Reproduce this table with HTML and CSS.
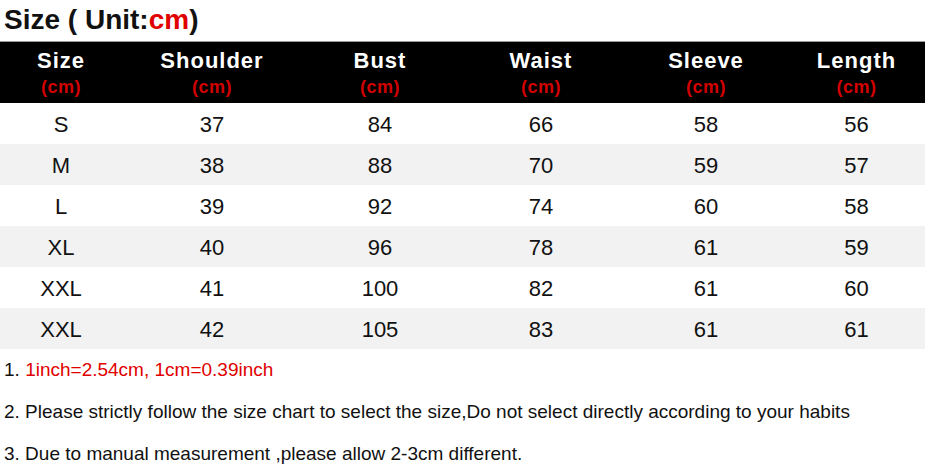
FILE: index.html
```html
<!DOCTYPE html>
<html>
<head>
<meta charset="utf-8">
<link rel="stylesheet" href="styles.css">
</head>
<body>
<div class="page">
  <h1 class="title">Size ( Unit:<span class="red">cm</span>)</h1>
  <table class="chart">
    <colgroup>
      <col class="c1"><col class="c2"><col class="c3"><col class="c4"><col class="c5"><col class="c6">
    </colgroup>
    <thead>
      <tr>
        <th><div class="hname">Size</div><div class="unit">(cm)</div></th>
        <th><div class="hname">Shoulder</div><div class="unit">(cm)</div></th>
        <th><div class="hname">Bust</div><div class="unit">(cm)</div></th>
        <th><div class="hname">Waist</div><div class="unit">(cm)</div></th>
        <th><div class="hname">Sleeve</div><div class="unit">(cm)</div></th>
        <th><div class="hname">Length</div><div class="unit">(cm)</div></th>
      </tr>
    </thead>
    <tbody>
      <tr><td>S</td><td>37</td><td>84</td><td>66</td><td>58</td><td>56</td></tr>
      <tr class="alt"><td>M</td><td>38</td><td>88</td><td>70</td><td>59</td><td>57</td></tr>
      <tr><td>L</td><td>39</td><td>92</td><td>74</td><td>60</td><td>58</td></tr>
      <tr class="alt"><td>XL</td><td>40</td><td>96</td><td>78</td><td>61</td><td>59</td></tr>
      <tr><td>XXL</td><td>41</td><td>100</td><td>82</td><td>61</td><td>60</td></tr>
      <tr class="alt"><td>XXL</td><td>42</td><td>105</td><td>83</td><td>61</td><td>61</td></tr>
    </tbody>
  </table>
  <div class="notes">
    <p class="note">1. <span class="red-n">1inch=2.54cm, 1cm=0.39inch</span></p>
    <p class="note">2. Please strictly follow the size chart to select the size,Do not select directly according to your habits</p>
    <p class="note">3. Due to manual measurement ,please allow 2-3cm different.</p>
  </div>
</div>
</body>
</html>
```
FILE: styles.css
```css
html, body {
  margin: 0;
  padding: 0;
  background: #ffffff;
}
body {
  font-family: "Liberation Sans", Arial, sans-serif;
  color: #111;
}
.page {
  width: 925px;
  height: 474px;
  overflow: hidden;
}
.title {
  margin: 0;
  padding: 4px 0 0 4px;
  height: 41px;
  box-sizing: border-box;
  font-size: 28px;
  font-weight: bold;
  line-height: 32px;
  color: #111;
}
.red { color: #e00000; }
.chart {
  width: 925px;
  border-collapse: collapse;
  table-layout: fixed;
}
.c1 { width: 122px; }
.c2 { width: 180px; }
.c3 { width: 156px; }
.c4 { width: 166px; }
.c5 { width: 164px; }
.c6 { width: 137px; }
.chart thead th {
  background: #000;
  border-top: 1px solid #999;
  height: 61px;
  padding: 0;
  text-align: center;
  vertical-align: top;
  font-weight: bold;
}
.hname {
  color: #fff;
  font-size: 22px;
  letter-spacing: 1px;
  line-height: 22px;
  padding-top: 8px;
}
.unit {
  color: #d40000;
  font-size: 18px;
  letter-spacing: 0.5px;
  line-height: 20px;
  padding-top: 5px;
}
.chart td {
  height: 39px;
  padding: 2px 0 0 0;
  text-align: center;
  vertical-align: middle;
  font-size: 22px;
  color: #111;
}
.chart tr.alt td { background: #f2f2f2; }
.notes {
  padding: 10px 0 0 4px;
}
.note {
  margin: 0;
  height: 42px;
  line-height: 22px;
  font-size: 19px;
  color: #111;
}
.red-n { color: #e00000; }
```
